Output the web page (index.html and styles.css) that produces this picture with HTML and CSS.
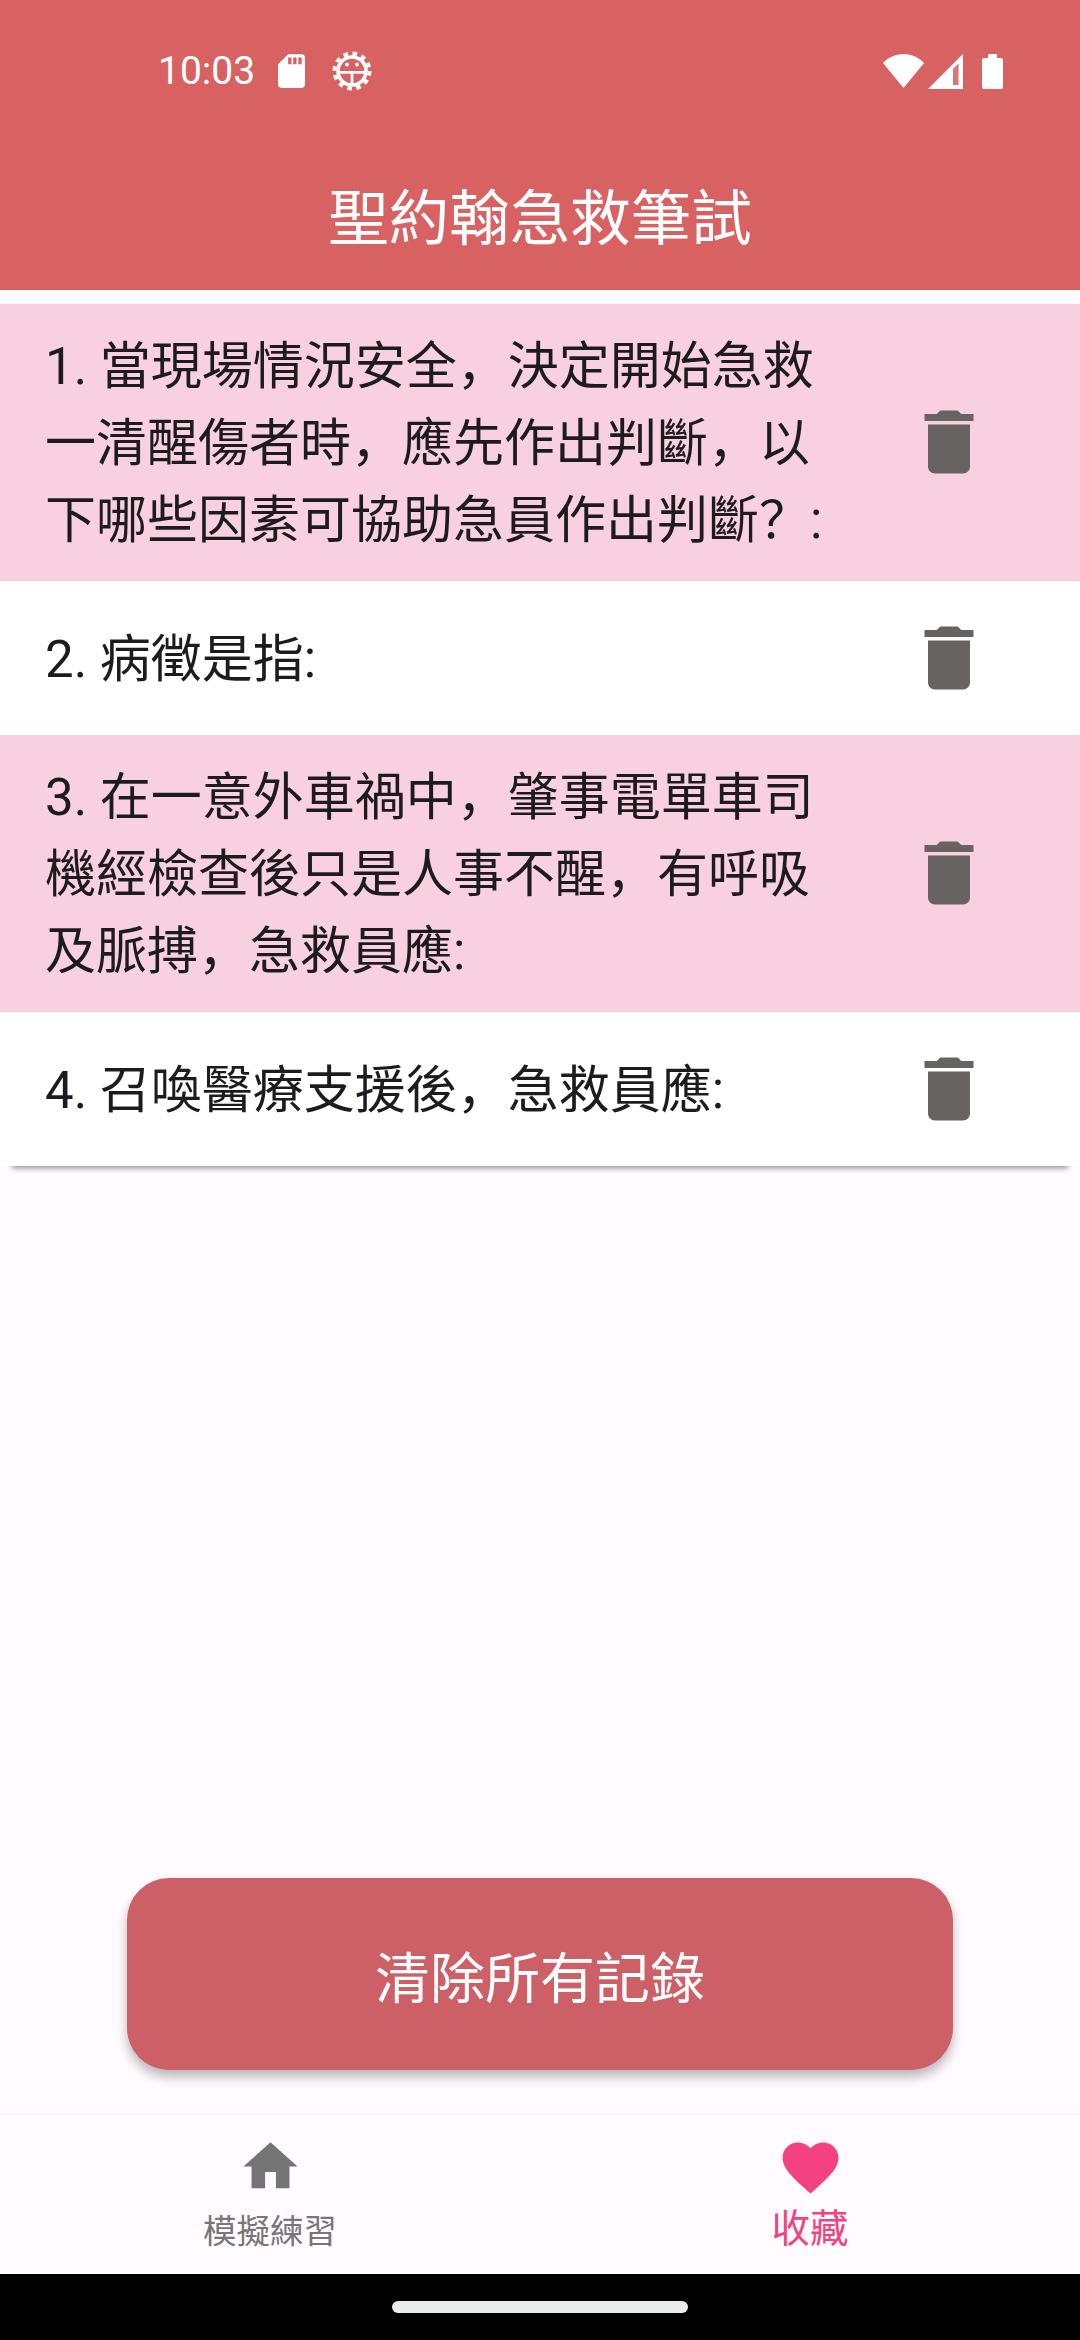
FILE: index.html
```html
<!DOCTYPE html>
<html lang="zh-Hans">
<head>
<meta charset="utf-8">
<title>聖約翰急救筆試</title>
<link rel="stylesheet" href="styles.css">
</head>
<body>
<div class="app">
  <header class="header">
    <div class="status">
      <div class="status-left">
        <span class="time">10:03</span>
        <svg class="sd" viewBox="4 2 16 20"><path fill="#fff" d="M18 2h-8L4.020 8 4 20c0 1.100.9 2 2 2h12c1.100 0 2-.9 2-2V4c0-1.100-.9-2-2-2zm-6 6h-2V4h2v4zm3 0h-2V4h2v4zm3 0h-2V4h2v4z"/></svg>
        <svg class="gear" viewBox="0 0 40 40">
          <circle cx="20" cy="20" r="17.500" fill="none" stroke="#fff" stroke-width="4" stroke-dasharray="4.580 4.580"/>
          <circle cx="20" cy="20" r="14" fill="none" stroke="#fff" stroke-width="3.600"/>
          <path fill="#fff" d="M6 20h28v2.800H21.400V34h-2.800V22.800H6z"/>
          <circle cx="15" cy="13.500" r="1.900" fill="#fff"/>
          <circle cx="25" cy="13.500" r="1.900" fill="#fff"/>
        </svg>
      </div>
      <div class="status-right">
        <svg class="wifi" viewBox="0 0 41 34"><path fill="#fff" d="M0 9C5 3.500 12.500 0 20.500 0S36 3.500 41 9L20.500 34z"/></svg>
        <svg class="signal" viewBox="0 0 35 35"><path fill="#fff" fill-rule="evenodd" d="M0 35 35 0v35zM25 15V31h5.500V9.500z"/><path fill="#fff" fill-opacity=".12" d="M25 15V31h5.500V9.500z"/></svg>
        <svg class="battery" viewBox="0 0 21 35"><path fill="#fff" d="M6 0h9v4h4a2 2 0 0 1 2 2v27a2 2 0 0 1-2 2H2a2 2 0 0 1-2-2V6a2 2 0 0 1 2-2h4z"/></svg>
      </div>
    </div>
    <h1 class="title">聖約翰急救筆試</h1>
  </header>

  <main class="main">
    <ul class="list">
      <li class="row row-pink">
        <p class="question">1. 當現場情況安全，決定開始急救一清醒傷者時，應先作出判斷，以下哪些因素可協助急員作出判斷？:</p>
        <svg class="trash" viewBox="0 0 24 24"><path d="M6 19c0 1.100.9 2 2 2h8c1.100 0 2-.9 2-2V7H6v12zM19 4h-3.500l-1-1h-5l-1 1H5v2h14V4z"/></svg>
      </li>
      <li class="row">
        <p class="question">2. 病徵是指:</p>
        <svg class="trash" viewBox="0 0 24 24"><path d="M6 19c0 1.100.9 2 2 2h8c1.100 0 2-.9 2-2V7H6v12zM19 4h-3.500l-1-1h-5l-1 1H5v2h14V4z"/></svg>
      </li>
      <li class="row row-pink">
        <p class="question">3. 在一意外車禍中，肇事電單車司機經檢查後只是人事不醒，有呼吸及脈搏，急救員應:</p>
        <svg class="trash" viewBox="0 0 24 24"><path d="M6 19c0 1.100.9 2 2 2h8c1.100 0 2-.9 2-2V7H6v12zM19 4h-3.500l-1-1h-5l-1 1H5v2h14V4z"/></svg>
      </li>
      <li class="row">
        <p class="question">4. 召喚醫療支援後，急救員應:</p>
        <svg class="trash" viewBox="0 0 24 24"><path d="M6 19c0 1.100.9 2 2 2h8c1.100 0 2-.9 2-2V7H6v12zM19 4h-3.500l-1-1h-5l-1 1H5v2h14V4z"/></svg>
      </li>
    </ul>
    <button class="clear" type="button">清除所有記錄</button>
  </main>

  <nav class="nav">
    <div class="nav-item">
      <svg class="nav-home" viewBox="0 0 24 24"><path d="M10 20v-6h4v6h5v-8h3L12 3 2 12h3v8z"/></svg>
      <span class="nav-label">模擬練習</span>
    </div>
    <div class="nav-item nav-active">
      <svg class="nav-heart" viewBox="0 0 24 24"><path d="M12 21.350l-1.450-1.320C5.400 15.360 2 12.280 2 8.500 2 5.420 4.420 3 7.500 3c1.740 0 3.410.81 4.500 2.090C13.090 3.810 14.760 3 16.500 3 19.580 3 22 5.420 22 8.500c0 3.780-3.400 6.860-8.550 11.540L12 21.350z"/></svg>
      <span class="nav-label">收藏</span>
    </div>
  </nav>

  <footer class="gesture"><span class="pill"></span></footer>
</div>
</body>
</html>
```
FILE: styles.css
```css
* { box-sizing: border-box; }
html, body { margin: 0; padding: 0; }
body {
  width: 1080px;
  height: 2340px;
  overflow: hidden;
  background: #fffbfe;
  font-family: Roboto, "Noto Sans CJK SC", sans-serif;
}
.app { display: flex; flex-direction: column; height: 2340px; }

.header { height: 290px; background: #d86262; color: #fff; flex: none; }
.status {
  height: 142px;
  padding: 0 77px 0 158px;
  display: flex;
  align-items: center;
  justify-content: space-between;
}
.status-left { display: flex; align-items: center; }
.time { font-size: 39px; line-height: 42px; width: 120px; }
.sd { width: 27px; height: 34px; }
.gear { width: 40px; height: 40px; margin-left: 27px; }
.status-right { display: flex; align-items: center; }
.wifi { width: 41px; height: 34px; }
.signal { width: 35px; height: 35px; margin-left: 4px; }
.battery { width: 21px; height: 35px; margin-left: 19px; }
.title {
  margin: 0;
  height: 142px;
  display: flex;
  align-items: center;
  justify-content: center;
  font-size: 60.500px;
  font-weight: 400;
}

.main { flex: 1; display: flex; flex-direction: column; min-height: 0; padding-top: 14px; }
.list {
  margin: 0;
  padding: 0;
  list-style: none;
  background: #fff;
  box-shadow: 0 14px 6px -12px rgba(0, 0, 0, .45);
}
.row {
  display: flex;
  align-items: center;
  justify-content: space-between;
  min-height: 154px;
  padding: 21px 89px 21px 45px;
}
.row-pink { background: #f8d0df; border-bottom: 1px solid #f1c9d8; }
.question {
  margin: 0;
  width: 795px;
  padding-top: 3px;
  font-size: 51px;
  line-height: 77px;
  color: #1c1b1f;
}
.trash { width: 84px; height: 84px; fill: #676363; flex: none; }

.clear {
  align-self: center;
  margin-top: auto;
  margin-bottom: 45px;
  width: 826px;
  height: 192px;
  border: 0;
  border-radius: 42px;
  background: #cd5f67;
  color: #fff;
  font: inherit;
  font-size: 55px;
  box-shadow: 0 7px 12px rgba(0, 0, 0, .28);
}

.nav {
  flex: none;
  height: 159px;
  display: flex;
  background: #fffbfe;
  box-shadow: 0 -2px 4px rgba(0, 0, 0, .04);
}
.nav-item {
  flex: 1;
  display: flex;
  flex-direction: column;
  align-items: center;
  color: #79757a;
}
.nav-home { width: 65px; height: 65px; margin-top: 19px; fill: #767377; display: block; }
.nav-heart { width: 67px; height: 67px; margin-top: 19px; fill: #f44180; display: block; }
.nav-label { font-size: 33.500px; line-height: 44px; margin-top: 11px; }
.nav-active { color: #f44180; }
.nav-active .nav-label { font-size: 38.500px; line-height: 48px; margin-top: 4px; }

.gesture { flex: none; height: 66px; background: #000; display: flex; justify-content: center; padding-top: 27px; }
.pill { width: 296px; height: 12px; border-radius: 6px; background: #e9eaea; }
```
